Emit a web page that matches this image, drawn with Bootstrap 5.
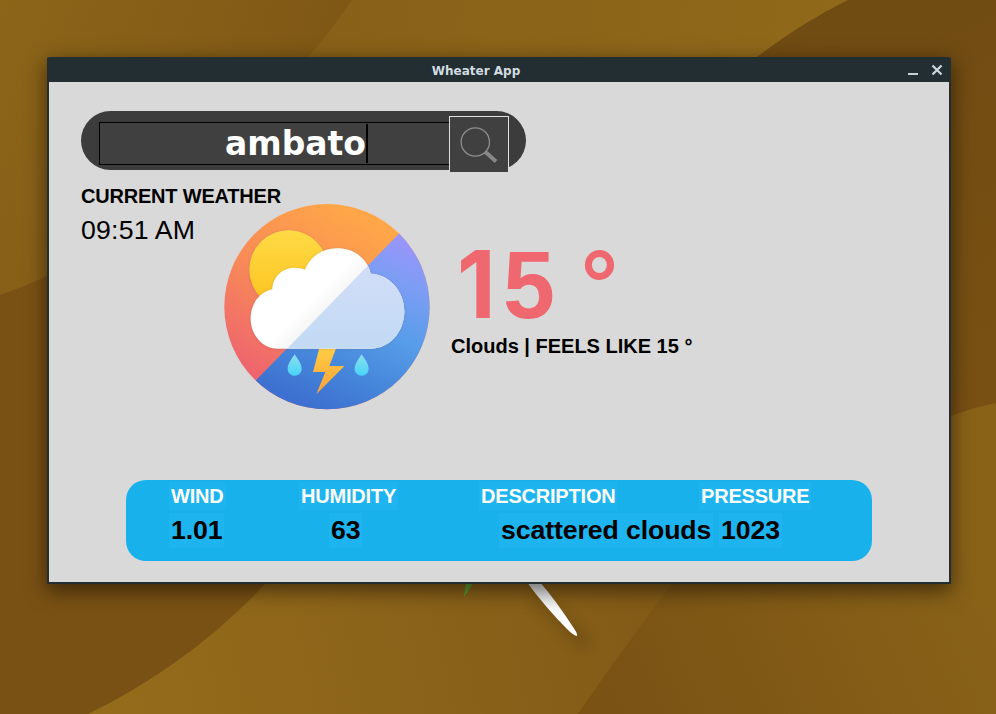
<!DOCTYPE html>
<html lang="en">
<head>
<meta charset="utf-8">
<meta name="viewport" content="width=device-width, initial-scale=1">
<title>Wheater App</title>
<link href="https://cdn.jsdelivr.net/npm/bootstrap@5.3.0/dist/css/bootstrap.min.css" rel="stylesheet">
<style>
body{font-family:"Liberation Sans",Arial,sans-serif;color:#000;background:#805916;height:714px}
.wallpaper{position:absolute;left:0;top:0;width:996px;height:714px}
.app-window{position:absolute;left:47px;top:57px;width:904px;height:527px;background:#d9d9d9;border:2px solid #232e33;border-top:0;border-radius:2px 2px 0 0;box-shadow:0 6px 20px 1px rgba(0,0,0,.5)}
.titlebar{height:25px;flex:none;background:#232e33;color:#d2dde2;font:bold 12px/25px "DejaVu Sans",sans-serif;padding-right:5px}
.titlebar .title-text{padding-top:3px;margin-right:3px}
.search-bar{width:445px;height:59px;flex:none;margin:29px 0 0 32px;background:#3c3c3c;border-radius:30px;padding:0 17px 0 18px}
.search-entry{width:350px;height:43px;margin-top:11px;background:#404040;border:1px solid #000;border-right:0;color:#fff;font:bold 33px/41px "DejaVu Sans",sans-serif;padding-left:44px}
.caret{width:2px;height:39px;background:#000}
.search-btn{width:60px;height:56px;margin-top:5px;background:#404040;border:1px solid #e0e0e0;border-bottom:0;border-radius:0;padding:0;flex:none}
.now{height:240px;flex:none;margin:10px 0 0 32px}
.when{width:143px;flex:none;white-space:nowrap}
.when-title{font-size:20px;font-weight:700;line-height:30px;letter-spacing:-.2px;padding-top:1px}
.when-time{font-size:26.67px;line-height:39px;letter-spacing:.2px}
.now-icon{width:206px;height:206px;margin-top:24px;flex:none}
.reading{margin:54px 0 0 21px;white-space:nowrap}
.temp{color:#ef6870;font-size:93.33px;font-weight:700;line-height:103px;height:100px;transform:scaleY(1.04)}
.temp-one{font-family:Inter,sans-serif;font-size:89.5px;display:inline-block;width:52px;text-indent:6px;line-height:1}
.feels{font-size:20px;font-weight:700;line-height:24px}
.metrics{width:746px;height:81px;flex:none;margin:60px 0 0 77px;background:#19b1ec;border-radius:20px;padding:2px 0 0 43px;white-space:nowrap}
.metric-row{display:grid;font-weight:700}
.metric-row>div{justify-self:start;background:#1db4ef;padding:0 2px}
.metric-names{grid-template-columns:130px 180px 220px auto;color:#fff;font-size:20px;line-height:28px;letter-spacing:-.2px}
.metric-values{grid-template-columns:160px 170px 220px auto;font-size:26.67px;line-height:35px;margin-top:3px;letter-spacing:-.1px}
</style>
<script src="https://cdn.jsdelivr.net/npm/bootstrap@5.3.0/dist/js/bootstrap.bundle.min.js"></script>
</head>
<body class="position-relative overflow-hidden m-0">
<svg class="wallpaper" viewBox="0 0 996 714" aria-hidden="true">
  <defs>
    <linearGradient id="w1" x1="0" y1="0" x2="1" y2=".35"><stop offset="0" stop-color="#8c6519"/><stop offset="1" stop-color="#7e5615"/></linearGradient>
    <linearGradient id="w2" gradientUnits="userSpaceOnUse" x1="320" y1="0" x2="850" y2="60"><stop offset="0" stop-color="#886018"/><stop offset="1" stop-color="#90691a"/></linearGradient>
    <linearGradient id="w3" gradientUnits="userSpaceOnUse" x1="850" y1="0" x2="996" y2="400"><stop offset="0" stop-color="#704b12"/><stop offset="1" stop-color="#795013"/></linearGradient>
    <linearGradient id="w4" gradientUnits="userSpaceOnUse" x1="130" y1="700" x2="640" y2="590"><stop offset="0" stop-color="#946b1b"/><stop offset="1" stop-color="#835b17"/></linearGradient>
    <linearGradient id="w5" gradientUnits="userSpaceOnUse" x1="610" y1="690" x2="960" y2="540"><stop offset="0" stop-color="#7a5214"/><stop offset="1" stop-color="#896218"/></linearGradient>
    <linearGradient id="wh" x1="0" y1="0" x2="0" y2="1"><stop offset="0" stop-color="#d8d6d6"/><stop offset=".5" stop-color="#f8f8f8"/><stop offset="1" stop-color="#fff"/></linearGradient>
    <filter id="soft"><feGaussianBlur stdDeviation="7"/></filter>
  </defs>
  <rect width="996" height="714" fill="#7a5114"/>
  <path fill="url(#w2)" d="M300 0H848Q800 24 757 57L600 300H200Z"/>
  <path fill="url(#w1)" d="M0 0H352Q332 30 308 57Q190 210 47 276Q24 287 0 295Z"/>
  <path fill="url(#w3)" d="M848 0H996V404L951 416L700 110L757 57Q800 24 848 0Z"/>
  <path fill="url(#w4)" d="M265 584Q190 664 88 714H578Q618 656 672 584L640 500H300Z"/>
  <path fill="url(#w5)" d="M996 403Q972 408 951 416Q780 450 672 584Q618 656 578 714H996Z"/>
  <path d="M540 592L592 640L582 650L530 600Z" fill="#000" opacity=".14" filter="url(#soft)"/>
  <path fill="#5b9a2e" d="M466 582H474L464 597Z"/>
  <path fill="url(#wh)" d="M526 581H539Q557 602 573 627Q578 634 577 636Q574 636 567 629Q546 608 526 581Z"/>
</svg>

<main class="app-window d-flex flex-column">
  <header class="titlebar d-flex justify-content-between align-items-center">
    <span></span>
    <span class="title-text">Wheater App</span>
    <svg width="38" height="25" viewBox="0 0 38 25" aria-hidden="true"><path d="M2 17H12" stroke="#c3d1d6" stroke-width="2"/><path d="M26.5 8.5L35.5 17.5M35.5 8.5L26.5 17.5" stroke="#c8d6dc" stroke-width="2.3"/></svg>
  </header>

  <div class="search-bar d-flex align-items-start">
    <div class="search-entry d-flex align-items-center justify-content-center flex-shrink-0"><span>ambato</span><span class="caret"></span></div>
    <button class="search-btn btn" aria-label="Search">
      <svg class="d-block" width="58" height="55" viewBox="450 117 58 55"><circle cx="475.3" cy="142" r="14.2" fill="none" stroke="#8e8e8e" stroke-width="1.3"/><path d="M485.5 152L496 161.5" stroke="#888" stroke-width="3.8"/></svg>
    </button>
  </div>

  <section class="now d-flex align-items-start">
    <div class="when">
      <div class="when-title">CURRENT WEATHER</div>
      <div class="when-time">09:51 AM</div>
    </div>
    <svg class="now-icon" viewBox="27 27 618 618" aria-hidden="true">
      <defs>
        <linearGradient id="warm" gradientUnits="userSpaceOnUse" x1="410" y1="40" x2="110" y2="540"><stop offset="0" stop-color="#ffa748"/><stop offset=".5" stop-color="#f88b57"/><stop offset="1" stop-color="#ee646e"/></linearGradient>
        <linearGradient id="cool" gradientUnits="userSpaceOnUse" x1="560" y1="120" x2="330" y2="650"><stop offset="0" stop-color="#9c94fb"/><stop offset=".22" stop-color="#7d9df4"/><stop offset=".5" stop-color="#579de9"/><stop offset=".78" stop-color="#4585da"/><stop offset="1" stop-color="#3d70d0"/></linearGradient>
        <linearGradient id="sun" x1="0" y1="0" x2="0" y2="1"><stop offset="0" stop-color="#ffda45"/><stop offset="1" stop-color="#fbc21d"/></linearGradient>
        <linearGradient id="pale" x1="0" y1="0" x2="0" y2="1"><stop offset="0" stop-color="#d5def9"/><stop offset="1" stop-color="#c2daf4"/></linearGradient>
        <linearGradient id="fold" gradientUnits="userSpaceOnUse" x1="300" y1="300" x2="336" y2="336"><stop offset="0" stop-color="#fff"/><stop offset="1" stop-color="#f7f7f7"/></linearGradient>
        <linearGradient id="bolt" x1="0" y1="0" x2="0" y2="1"><stop offset="0" stop-color="#ffd044"/><stop offset="1" stop-color="#fb9e3b"/></linearGradient>
        <linearGradient id="drop" x1="0" y1="0" x2="0" y2="1"><stop offset="0" stop-color="#8ae0ec"/><stop offset="1" stop-color="#49d3fa"/></linearGradient>
        <clipPath id="disc"><circle cx="336" cy="335" r="308"/></clipPath>
        <filter id="edge" x="-10%" y="-10%" width="120%" height="120%"><feDropShadow dx="0" dy="1" stdDeviation="3" flood-color="#704070" flood-opacity=".3"/></filter>
        <path id="cloud" d="M190 461C144 461 107 421 107 371C107 326 134 291 172 283C173 246 202 218 239 218Q257 218 270 224C286 184 322 160 368 160C416 160 458 190 467 236C524 238 568 289 568 349C568 410 524 461 468 461Z"/>
        <clipPath id="right"><path d="M460 210L216 461H600V180Z"/></clipPath>
      </defs>
      <g clip-path="url(#disc)">
        <rect width="680" height="680" fill="url(#warm)"/>
        <path d="M553 115L700 -30V700H-25L123 556Z" fill="url(#cool)"/>
      </g>
      <circle cx="221" cy="224" r="118" fill="url(#sun)" filter="url(#edge)"/>
      <path d="M314 455H365L343 513H388L304 598L331 531H294Z" fill="url(#bolt)"/>
      <use href="#cloud" fill="url(#fold)" filter="url(#edge)"/>
      <g clip-path="url(#right)"><use href="#cloud" fill="url(#pale)"/></g>
      <path id="tear" d="M239 478C248 491 260 507 260 521C260 533 251 542 239 542C227 542 218 533 218 521C218 507 230 491 239 478Z" fill="url(#drop)"/>
      <use href="#tear" x="201"/>
    </svg>
    <div class="reading">
      <div class="temp"><span class="temp-one">1</span>5 °</div>
      <div class="feels">Clouds | FEELS LIKE 15 °</div>
    </div>
  </section>

  <section class="metrics">
    <div class="metric-row metric-names"><div>WIND</div><div>HUMIDITY</div><div>DESCRIPTION</div><div>PRESSURE</div></div>
    <div class="metric-row metric-values"><div>1.01</div><div>63</div><div>scattered clouds</div><div>1023</div></div>
  </section>
</main>
</body>
</html>
